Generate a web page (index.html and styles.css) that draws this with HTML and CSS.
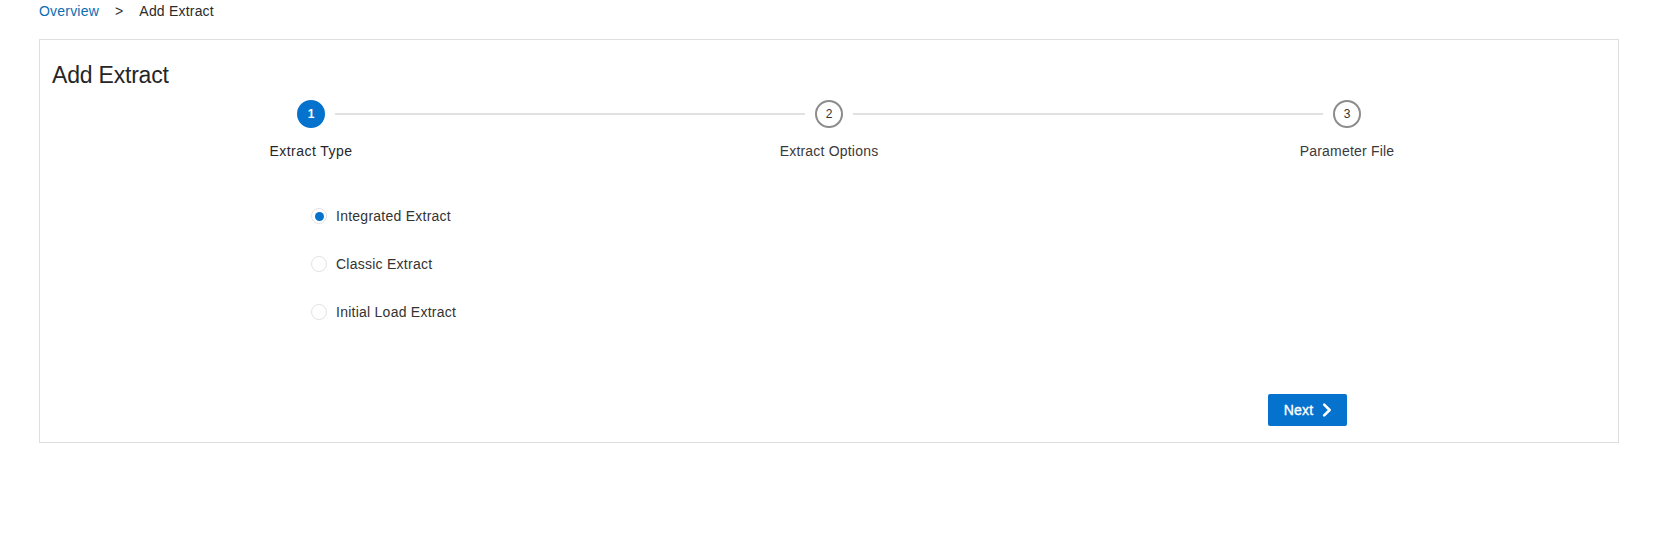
FILE: index.html
```html
<!DOCTYPE html>
<html>
<head>
<meta charset="utf-8">
<link rel="stylesheet" href="styles.css">
</head>
<body>
<nav class="crumbs">
  <a class="crumb-link" href="#">Overview</a><span class="crumb-sep">&gt;</span><span class="crumb-current">Add Extract</span>
</nav>
<section class="panel">
  <h1 class="title">Add Extract</h1>
  <div class="train">
    <div class="step">
      <div class="step-head">
        <span class="bar bar-hidden"></span>
        <span class="dot dot-active">1</span>
        <span class="bar"></span>
      </div>
      <div class="step-label step-label-active">Extract Type</div>
    </div>
    <div class="step">
      <div class="step-head">
        <span class="bar"></span>
        <span class="dot">2</span>
        <span class="bar"></span>
      </div>
      <div class="step-label">Extract Options</div>
    </div>
    <div class="step">
      <div class="step-head">
        <span class="bar"></span>
        <span class="dot">3</span>
        <span class="bar bar-hidden"></span>
      </div>
      <div class="step-label">Parameter File</div>
    </div>
  </div>
  <div class="options">
    <label class="option"><span class="radio radio-on"></span><span class="option-text">Integrated Extract</span></label>
    <label class="option"><span class="radio"></span><span class="option-text">Classic Extract</span></label>
    <label class="option"><span class="radio"></span><span class="option-text">Initial Load Extract</span></label>
  </div>
  <div class="actions">
    <button class="btn-next" type="button"><span>Next</span><svg class="chev" width="10" height="14" viewBox="0 0 10 14"><path d="M2.2 1.6 L7.6 7 L2.2 12.4" fill="none" stroke="#fff" stroke-width="2.6" stroke-linecap="round" stroke-linejoin="round"/></svg></button>
  </div>
</section>
</body>
</html>
```

FILE: styles.css
```css
* { box-sizing: border-box; }
html, body { margin: 0; padding: 0; background: #fff; }
body {
  font-family: "Liberation Sans", Arial, sans-serif;
  font-size: 14px;
  color: #333;
  width: 1680px;
  height: 553px;
  overflow: hidden;
}
.crumbs {
  height: 22px;
  line-height: 22px;
  padding-left: 39px;
  font-size: 14px;
  letter-spacing: 0.2px;
}
.crumb-link { color: #0a6eb4; text-decoration: none; }
.crumb-sep { margin: 0 16px; color: #333; }
.crumb-current { color: #2b2b2b; }

.panel {
  margin: 17px 0 0 39px;
  width: 1580px;
  border: 1px solid #dedede;
  padding: 12px;
}
.title {
  margin: 0;
  padding-top: 9px;
  font-size: 23px;
  line-height: 28px;
  font-weight: normal;
  letter-spacing: -0.2px;
  color: #262626;
}
.train {
  display: grid;
  grid-template-columns: repeat(3, 1fr);
  margin-top: 11px;
}
.step { display: flex; flex-direction: column; align-items: center; }
.step-head {
  display: flex;
  align-items: center;
  width: 100%;
  height: 28px;
  gap: 10px;
}
.bar { flex: 1; height: 2px; background: #e1e1e1; }
.bar-hidden { background: transparent; }
.dot {
  width: 28px;
  height: 28px;
  border-radius: 50%;
  border: 2px solid #8c8c8c;
  display: flex;
  align-items: center;
  justify-content: center;
  font-size: 12px;
  color: #333;
  background: #fff;
  flex: none;
}
.dot-active {
  background: #0572ce;
  border-color: #0572ce;
  color: #fff;
  font-weight: bold;
}
.step-label {
  margin-top: 13px;
  line-height: 20px;
  font-size: 14px;
  letter-spacing: 0.2px;
  color: #3a3a3a;
}
.step-label-active { color: #262626; letter-spacing: 0.45px; }

.options {
  margin-top: 31px;
  padding-left: 259px;
  display: flex;
  flex-direction: column;
}
.option {
  height: 48px;
  display: flex;
  align-items: center;
  gap: 9px;
  color: #333;
}
.radio {
  width: 16px;
  height: 16px;
  border-radius: 50%;
  border: 1px solid #e3e3e3;
  background: #fff;
  display: flex;
  align-items: center;
  justify-content: center;
  flex: none;
}
.radio-on::after {
  content: "";
  width: 9px;
  height: 9px;
  border-radius: 50%;
  background: #0572ce;
}
.option-text { line-height: 20px; letter-spacing: 0.25px; }

.actions {
  margin-top: 58px;
  margin-bottom: 4px;
  display: flex;
  justify-content: flex-end;
  padding-right: 259px;
}
.btn-next {
  width: 79px;
  height: 32px;
  border: none;
  border-radius: 2px;
  background: #0572ce;
  color: #fff;
  font-family: "Liberation Sans", Arial, sans-serif;
  font-size: 14px;
  font-weight: normal;
  -webkit-text-stroke: 0.35px #fff;
  letter-spacing: 0.2px;
  display: flex;
  align-items: center;
  justify-content: center;
  gap: 9px;
  padding: 0 0 0 1px;
}
.chev { display: block; }
```
